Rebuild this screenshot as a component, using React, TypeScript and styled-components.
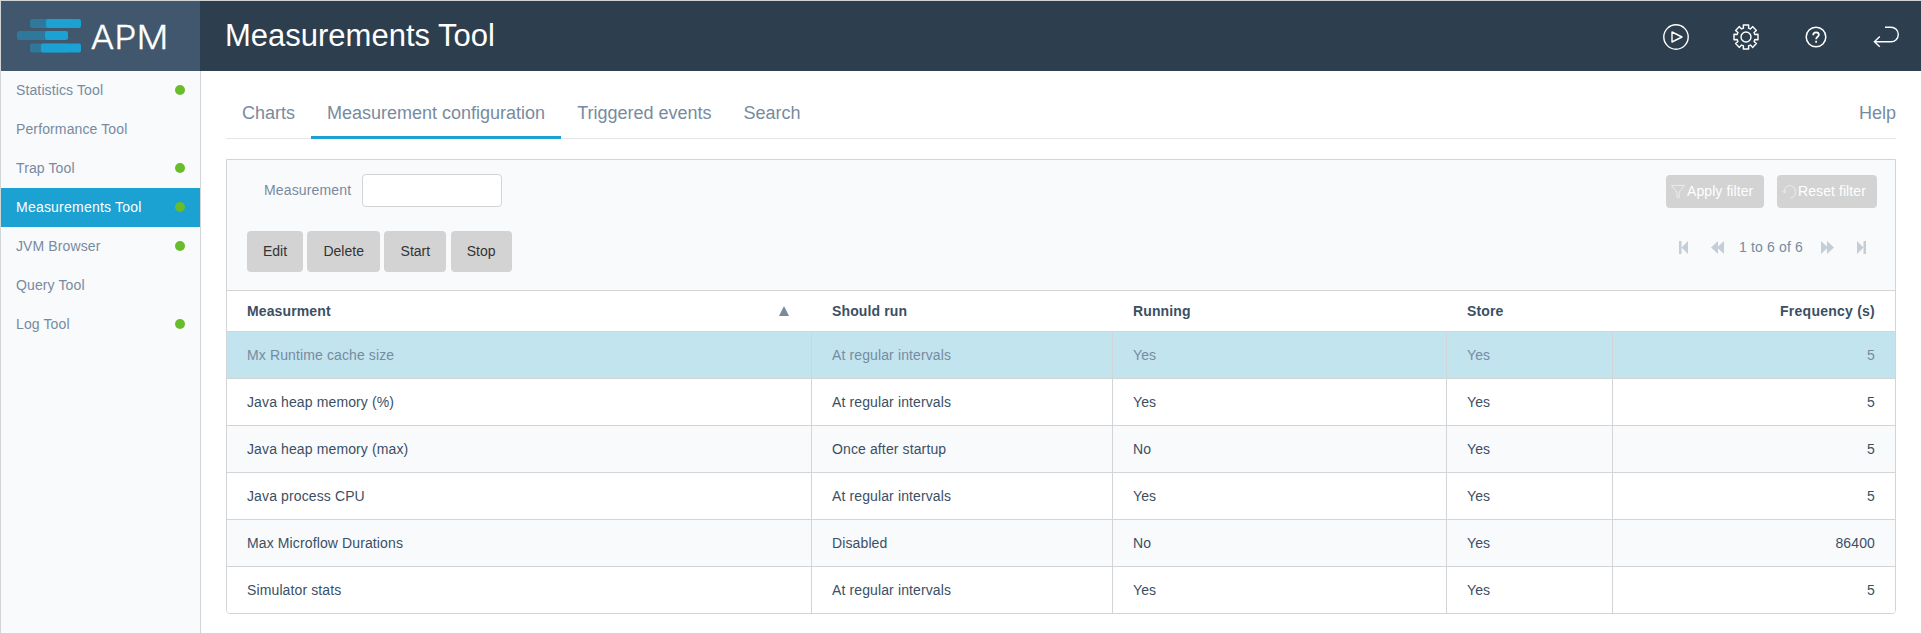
import React from "react";
import styled, { createGlobalStyle } from "styled-components";

const GlobalStyle = createGlobalStyle`
  *, *::before, *::after { box-sizing: border-box; }
  body {
    margin: 0;
    background: #fff;
    font-family: "Liberation Sans", Arial, sans-serif;
    font-size: 14px;
    color: #778ba0;
  }
`;

const Page = styled.div`
  height: 634px;
  border: 1px solid #d3d4d5;
  display: flex;
  flex-direction: column;
`;

const Header = styled.header`
  height: 70px;
  flex: none;
  display: flex;
  background: #2d3e4f;
`;

const Brand = styled.div`
  width: 199px;
  background: #40576d;
`;

const Title = styled.h1`
  margin: 0;
  padding-left: 25px;
  flex: 1;
  font-size: 31px;
  font-weight: 400;
  line-height: 69px;
  color: #fff;
`;

const HeaderIcons = styled.div`
  display: flex;
  align-items: center;
  gap: 44px;
  padding: 1px 22px 0 0;
  svg { display: block; }
`;

const Body = styled.div`
  flex: 1;
  display: flex;
  min-height: 0;
`;

const Sidebar = styled.nav`
  width: 200px;
  flex: none;
  background: #f9fafc;
  border-right: 1px solid #d3d4d5;
`;

const NavItem = styled.a<{ $active?: boolean }>`
  display: flex;
  align-items: center;
  justify-content: space-between;
  height: 39px;
  padding: 0 15px 2px;
  letter-spacing: ${(p) => (p.$active ? "0.22px" : "0.12px")};
  color: ${(p) => (p.$active ? "#fff" : "#778ba0")};
  background: ${(p) => (p.$active ? "#1ba1d2" : "transparent")};
`;

const Dot = styled.span`
  width: 10px;
  height: 10px;
  margin-top: 1px;
  border-radius: 50%;
  background: #67bd2c;
`;

const Main = styled.main`
  flex: 1;
  padding: 24px 25px 0;
`;

const Tabs = styled.div`
  display: flex;
  height: 44px;
  border-bottom: 1px solid #e6e7e8;
  font-size: 18px;
  line-height: 36px;
`;

const Tab = styled.a<{ $active?: boolean }>`
  height: 44px;
  padding: 0 16px;
  border-bottom: 3px solid ${(p) => (p.$active ? "#1ba1d2" : "transparent")};
`;

const HelpLink = styled.a`
  margin-left: auto;
`;

const Panel = styled.section`
  margin-top: 20px;
  border: 1px solid #d3d4d5;
  border-radius: 0 0 4px 4px;
  overflow: hidden;
`;

const Controls = styled.div`
  height: 130px;
  background: #f9fafc;
  padding: 14px 18px 0 20px;
`;

const FilterRow = styled.div`
  display: flex;
  align-items: flex-start;
  height: 34px;
  padding-left: 17px;
`;

const FilterLabel = styled.label`
  line-height: 32px;
  letter-spacing: 0.15px;
`;

const Input = styled.input`
  width: 140px;
  height: 33px;
  margin-left: 10.5px;
  border: 1px solid #d3d4d5;
  border-radius: 4px;
  background: #fff;
`;

const FilterButtons = styled.div`
  margin-left: auto;
  display: flex;
  gap: 13px;
`;

const FilterButton = styled.button<{ $width: number }>`
  display: flex;
  align-items: center;
  width: ${(p) => p.$width}px;
  height: 33px;
  margin-top: 1px;
  padding: 0 0 1px 5px;
  border: 0;
  border-radius: 4px;
  background: #d3d3d3;
  color: #fff;
  font: inherit;
  letter-spacing: 0.08px;
  white-space: nowrap;
  svg { flex: none; margin: 1px 2px 0 0; }
`;

const ActionRow = styled.div`
  display: flex;
  align-items: center;
  justify-content: space-between;
  margin-top: 23px;
  height: 41px;
`;

const Actions = styled.div`
  display: flex;
  gap: 4.2px;
`;

const ActionButton = styled.button<{ $width: number }>`
  width: ${(p) => p.$width}px;
  height: 41px;
  padding: 0 0 2px;
  border: 0;
  border-radius: 4px;
  background: #d3d3d3;
  color: #333;
  font: inherit;
`;

const Pager = styled.div`
  display: flex;
  align-items: center;
  margin-top: -9px;
  padding-right: 10px;
  svg { display: block; }
`;

const PageStatus = styled.span`
  width: 97px;
  padding-left: 15px;
  letter-spacing: 0.15px;
`;

const PagerGap = styled.span`
  width: 23px;
`;

const Table = styled.table`
  width: 100%;
  table-layout: fixed;
  border-collapse: separate;
  border-spacing: 0;
  color: #3b4f64;
`;

const Th = styled.th<{ $right?: boolean }>`
  height: 41px;
  padding: 0 20px;
  border-top: 1px solid #d3d4d5;
  letter-spacing: ${(p) => (p.$right ? "0.24px" : "0.12px")};
  text-align: ${(p) => (p.$right ? "right" : "left")};
`;

const SortHead = styled.span`
  display: flex;
  align-items: center;
  justify-content: space-between;
  padding-right: 3px;
`;

const Row = styled.tr<{ $selected?: boolean }>`
  background: ${(p) => (p.$selected ? "#c1e4ef" : "#fff")};
  color: ${(p) => (p.$selected ? "#778ba0" : "#3b4f64")};
  &:nth-child(odd) { background: ${(p) => (p.$selected ? "#c1e4ef" : "#f9fafc")}; }
`;

const Td = styled.td`
  height: 47px;
  padding: 0 20px;
  border-top: 1px solid #d3d4d5;
  border-right: 1px solid #d3d4d5;
  letter-spacing: 0.12px;
  &:last-child { border-right: 0; text-align: right; }
`;

const Logo = () => (
  <svg width="199" height="70" viewBox="1 1 199 70">
    <g fill="#2f789b">
      <rect x="30" y="19" width="40" height="9" rx="2" />
      <rect x="17" y="31" width="40" height="9" rx="2" />
      <rect x="30" y="43.5" width="40" height="9" rx="2" />
    </g>
    <g fill="#1ba1d2">
      <rect x="46" y="19" width="35" height="9" rx="2" />
      <rect x="45" y="31" width="23" height="9" rx="2" />
      <rect x="41" y="43.5" width="40" height="9" rx="2" />
    </g>
    <text
      x="90.5"
      y="49"
      textLength="78"
      lengthAdjust="spacingAndGlyphs"
      fill="#fff"
      stroke="#fff"
      strokeWidth="0.3"
      fontFamily="Inter, sans-serif"
      fontWeight="300"
      fontSize="33"
    >
      APM
    </text>
  </svg>
);

const PlayIcon = () => (
  <svg width="26" height="26" viewBox="0 0 26 26" fill="none" stroke="#fff" strokeWidth="1.4">
    <circle cx="13" cy="13" r="12.2" />
    <path d="M9 8v10l10-5z" strokeLinejoin="round" />
  </svg>
);

// Builds an eight-toothed cog outline around the centre of a 26px box.
const cog = Array.from({ length: 8 }, (_, i) => {
  const base = (i * Math.PI) / 4;
  return [
    [9.2, -0.28],
    [12.3, -0.22],
    [12.3, 0.22],
    [9.2, 0.28],
  ]
    .map(([r, a]) => `${(13 + r * Math.cos(base + a)).toFixed(2)},${(13 + r * Math.sin(base + a)).toFixed(2)}`)
    .join(" ");
}).join(" ");

const GearIcon = () => (
  <svg width="26" height="26" viewBox="0 0 26 26" fill="none" stroke="#fff" strokeWidth="1.4" strokeLinejoin="round">
    <polygon points={cog} />
    <circle cx="13" cy="13" r="5" />
  </svg>
);

const HelpIcon = () => (
  <svg width="26" height="26" viewBox="0 0 26 26" fill="none" stroke="#fff" strokeWidth="1.5">
    <circle cx="13" cy="13" r="9.8" />
    <path d="M10.2 11.2c0-4 5.7-3.6 5.7-.4 0 2-2.8 2-2.8 4.5M13.1 16.8v2" strokeWidth="1.7" />
  </svg>
);

const ReturnIcon = () => (
  <svg width="26" height="26" viewBox="0 0 26 26" fill="none" stroke="#fff" strokeWidth="1.4">
    <path d="M12 3.2h6a7.2 7.2 0 0 1 0 14.6H1.5M6.8 12.4l-5.4 5.4 5.4 5" />
  </svg>
);

const FunnelIcon = () => (
  <svg width="14" height="15" viewBox="0 0 14 15" fill="none" stroke="#f3f3f3" strokeWidth="0.8">
    <path d="M.6 1.4h12.8L8.2 8.2V14L5.9 13V8.2z" />
  </svg>
);

const UndoIcon = () => (
  <svg width="14" height="15" viewBox="0 0 14 15" fill="none" stroke="#f3f3f3" strokeWidth="0.8">
    <path d="M2.200 8.500a5.700 6.200 0 1 1 6 5.500M.2 6.600L2.200 8.800l2.400-2" />
  </svg>
);

const FirstIcon = () => (
  <svg width="9" height="13" viewBox="0 0 9 13" fill="#c5ced6">
    <path d="M0 0h2.5v13H0zM9 0v13L2.5 6.5z" />
  </svg>
);

const PrevIcon = () => (
  <svg width="13" height="13" viewBox="0 0 13 13" fill="#c5ced6">
    <path d="M7 0v13L0 6.5zM13 0v13L6 6.5z" />
  </svg>
);

const NextIcon = () => (
  <svg width="13" height="13" viewBox="0 0 13 13" fill="#c5ced6">
    <path d="M0 0v13l7-6.5zM6 0v13l7-6.5z" />
  </svg>
);

const LastIcon = () => (
  <svg width="10" height="13" viewBox="0 0 10 13" fill="#c5ced6">
    <path d="M6.5 0H9v13H6.5zM0 0v13l6.5-6.5z" />
  </svg>
);

const SortIcon = () => (
  <svg width="10" height="10" viewBox="0 0 10 10" fill="#778ba0">
    <path d="M5 0l5 10H0z" />
  </svg>
);

const tools = [
  { name: "Statistics Tool", on: true },
  { name: "Performance Tool", on: false },
  { name: "Trap Tool", on: true },
  { name: "Measurements Tool", on: true },
  { name: "JVM Browser", on: true },
  { name: "Query Tool", on: false },
  { name: "Log Tool", on: true },
];

const tabs = ["Charts", "Measurement configuration", "Triggered events", "Search"];

const actions = [
  { label: "Edit", width: 56 },
  { label: "Delete", width: 73 },
  { label: "Start", width: 62 },
  { label: "Stop", width: 61 },
];

const rows = [
  ["Mx Runtime cache size", "At regular intervals", "Yes", "Yes", "5"],
  ["Java heap memory (%)", "At regular intervals", "Yes", "Yes", "5"],
  ["Java heap memory (max)", "Once after startup", "No", "Yes", "5"],
  ["Java process CPU", "At regular intervals", "Yes", "Yes", "5"],
  ["Max Microflow Durations", "Disabled", "No", "Yes", "86400"],
  ["Simulator stats", "At regular intervals", "Yes", "Yes", "5"],
];

export default function App() {
  return (
    <>
      <GlobalStyle />
      <Page>
        <Header>
          <Brand>
            <Logo />
          </Brand>
          <Title>Measurements Tool</Title>
          <HeaderIcons>
            <PlayIcon />
            <GearIcon />
            <HelpIcon />
            <ReturnIcon />
          </HeaderIcons>
        </Header>
        <Body>
          <Sidebar>
            {tools.map((t) => (
              <NavItem key={t.name} $active={t.name === "Measurements Tool"}>
                {t.name}
                {t.on && <Dot />}
              </NavItem>
            ))}
          </Sidebar>
          <Main>
            <Tabs>
              {tabs.map((t) => (
                <Tab key={t} $active={t === "Measurement configuration"}>
                  {t}
                </Tab>
              ))}
              <HelpLink>Help</HelpLink>
            </Tabs>
            <Panel>
              <Controls>
                <FilterRow>
                  <FilterLabel htmlFor="measurement">Measurement</FilterLabel>
                  <Input id="measurement" />
                  <FilterButtons>
                    <FilterButton $width={98}>
                      <FunnelIcon />
                      Apply filter
                    </FilterButton>
                    <FilterButton $width={100}>
                      <UndoIcon />
                      Reset filter
                    </FilterButton>
                  </FilterButtons>
                </FilterRow>
                <ActionRow>
                  <Actions>
                    {actions.map((a) => (
                      <ActionButton key={a.label} $width={a.width}>
                        {a.label}
                      </ActionButton>
                    ))}
                  </Actions>
                  <Pager>
                    <FirstIcon />
                    <PagerGap />
                    <PrevIcon />
                    <PageStatus>1 to 6 of 6</PageStatus>
                    <NextIcon />
                    <PagerGap />
                    <LastIcon />
                  </Pager>
                </ActionRow>
              </Controls>
              <Table>
                <colgroup>
                  <col width="585" />
                  <col width="301" />
                  <col width="334" />
                  <col width="166" />
                  <col />
                </colgroup>
                <thead>
                  <tr>
                    <Th>
                      <SortHead>
                        Measurment
                        <SortIcon />
                      </SortHead>
                    </Th>
                    <Th>Should run</Th>
                    <Th>Running</Th>
                    <Th>Store</Th>
                    <Th $right>Frequency (s)</Th>
                  </tr>
                </thead>
                <tbody>
                  {rows.map((r, i) => (
                    <Row key={r[0]} $selected={i === 0}>
                      {r.map((c, j) => (
                        <Td key={j}>{c}</Td>
                      ))}
                    </Row>
                  ))}
                </tbody>
              </Table>
            </Panel>
          </Main>
        </Body>
      </Page>
    </>
  );
}
